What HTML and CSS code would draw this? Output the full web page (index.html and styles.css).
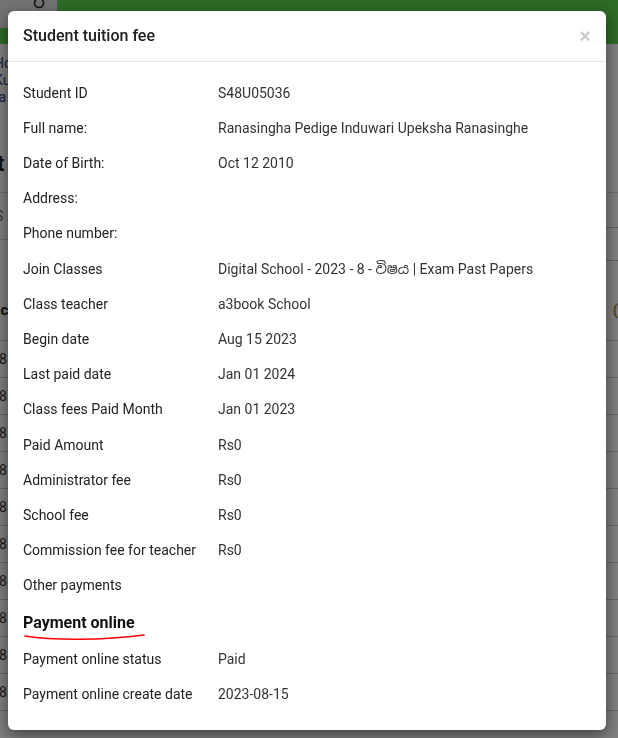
FILE: index.html
```html
<!DOCTYPE html>
<html lang="en">
<head>
    <meta charset="UTF-8">
    <meta name="viewport" content="width=device-width, initial-scale=1.0">
    <title>Student tuition fee</title>
    <link rel="stylesheet" href="styles.css">
</head>
<body>
    <div class="page">
        <div class="navbar">
            <div class="search-box">
                <svg class="search-icon" width="14" height="14" viewBox="0 0 14 14"><circle cx="6" cy="3" r="4.5" fill="none" stroke="#222" stroke-width="1.6"/></svg>
            </div>
        </div>
        <div class="side-links">
            <span class="dash">-</span>
            <a>Ho</a>
            <a>Ku</a>
            <a>ra</a>
        </div>
        <h2 class="page-title">t</h2>
        <div class="filter-row">
            <span class="filter-label">S</span>
            <input class="filter-input" placeholder="P">
        </div>
        <table class="student-table">
            <thead>
                <tr><th>uc</th><th></th><th class="sort">(</th></tr>
            </thead>
            <tbody>
                <tr><td>8</td><td></td><td></td></tr>
                <tr><td>8</td><td></td><td></td></tr>
                <tr><td>8</td><td></td><td></td></tr>
                <tr><td>8</td><td></td><td></td></tr>
                <tr><td>8</td><td></td><td></td></tr>
                <tr><td>8</td><td></td><td></td></tr>
                <tr><td>8</td><td></td><td></td></tr>
                <tr><td>8</td><td></td><td></td></tr>
                <tr><td>8</td><td></td><td></td></tr>
                <tr><td>8</td><td></td><td></td></tr>
            </tbody>
        </table>
    </div>

    <div class="modal-backdrop"></div>

    <div class="modal">
        <div class="modal-content">
            <div class="modal-header">
                <h4 class="modal-title">Student tuition fee</h4>
                <button class="close" type="button">&times;</button>
            </div>
            <div class="modal-body">
                <div class="info-row"><span class="label">Student ID</span><span class="value">S48U05036</span></div>
                <div class="info-row"><span class="label">Full name:</span><span class="value">Ranasingha Pedige Induwari Upeksha Ranasinghe</span></div>
                <div class="info-row"><span class="label">Date of Birth:</span><span class="value">Oct 12 2010</span></div>
                <div class="info-row"><span class="label">Address:</span><span class="value"></span></div>
                <div class="info-row"><span class="label">Phone number:</span><span class="value"></span></div>
                <div class="info-row"><span class="label">Join Classes</span><span class="value">Digital School - 2023 - 8 - විෂය | Exam Past Papers</span></div>
                <div class="info-row"><span class="label">Class teacher</span><span class="value">a3book School</span></div>
                <div class="info-row"><span class="label">Begin date</span><span class="value">Aug 15 2023</span></div>
                <div class="info-row"><span class="label">Last paid date</span><span class="value">Jan 01 2024</span></div>
                <div class="info-row"><span class="label">Class fees Paid Month</span><span class="value">Jan 01 2023</span></div>
                <div class="info-row"><span class="label">Paid Amount</span><span class="value">Rs0</span></div>
                <div class="info-row"><span class="label">Administrator fee</span><span class="value">Rs0</span></div>
                <div class="info-row"><span class="label">School fee</span><span class="value">Rs0</span></div>
                <div class="info-row"><span class="label">Commission fee for teacher</span><span class="value">Rs0</span></div>
                <div class="info-row"><span class="label">Other payments</span><span class="value"></span></div>

                <div class="section-heading">
                    <h5>Payment online</h5>
                    <svg class="underline" width="124" height="8" viewBox="0 0 124 8">
                        <path d="M2 2 C 30 6.5, 80 6.5, 121 1" fill="none" stroke="#f00" stroke-width="1.7" stroke-linecap="round"/>
                    </svg>
                </div>

                <div class="info-row"><span class="label">Payment online status</span><span class="value">Paid</span></div>
                <div class="info-row"><span class="label">Payment online create date</span><span class="value">2023-08-15</span></div>
            </div>
        </div>
    </div>
</body>
</html>
```

FILE: styles.css
```css
body {
    margin: 0;
    padding: 0;
    font-family: Roboto, "Noto Sans", "Noto Sans Sinhala", sans-serif;
    font-size: 14px;
    color: #333;
    background-color: #fff;
    overflow: hidden;
}

/* page behind the dialog */
.navbar {
    height: 44px;
    background-color: #5cd44f;
}

.search-box {
    width: 57px;
    height: 28px;
    background-color: #e6e6e6;
    position: relative;
}

.search-icon {
    position: absolute;
    left: 33px;
    top: 0;
}

.side-links {
    display: flex;
    flex-direction: column;
    line-height: 17px;
    margin-top: -6px;
    margin-left: -6px;
}

.side-links a,
.side-links .dash {
    color: #24407a;
}

.page-title {
    margin: 44px 0 0 -3px;
    font-size: 22px;
    line-height: 28px;
    color: #222;
}

.filter-row {
    margin-top: 14px;
    border-top: 1px solid #ddd;
    border-bottom: 1px solid #ddd;
    height: 46px;
    display: flex;
    align-items: center;
    justify-content: space-between;
    margin-left: -5px;
}

.filter-label {
    color: #666;
}

.filter-input {
    margin-top: 55px;
    width: 40px;
    height: 32px;
    border: 1px solid #bbb;
    margin-right: -20px;
    padding: 0 0 0 8px;
    font-size: 14px;
    font-family: Roboto, sans-serif;
}

.student-table {
    width: 100%;
    border-collapse: collapse;
    margin-top: 40px;
}

.student-table th {
    text-align: left;
    height: 60px;
    font-size: 15px;
    border-bottom: 1px solid #ccc;
    color: #222;
    padding: 0;
}

.student-table th:first-child {
    text-indent: -8px;
}

.student-table th.sort {
    text-align: right;
    color: #c77a00;
}

.student-table td {
    height: 36px;
    border-bottom: 1px solid #ccc;
    padding: 0;
    color: #333;
}

.student-table td:first-child {
    text-indent: -1px;
}

/* dialog */
.modal-backdrop {
    position: fixed;
    top: 0;
    left: 0;
    right: 0;
    bottom: 0;
    background-color: rgba(0, 0, 0, 0.5);
}

.modal {
    position: fixed;
    top: 0;
    left: 0;
    right: 0;
    bottom: 0;
    padding: 11px 12px 0 8px;
}

.modal-content {
    background-color: #fff;
    border-radius: 6px;
    box-shadow: 0 5px 15px rgba(0, 0, 0, 0.5);
}

.modal-header {
    display: flex;
    justify-content: space-between;
    align-items: center;
    padding: 14px 15px;
    border-bottom: 1px solid #e5e5e5;
}

.modal-title {
    margin: 0;
    font-size: 16px;
    line-height: 22px;
    font-weight: 500;
    color: #212121;
}

.close {
    background: none;
    border: none;
    padding: 0;
    font-size: 20px;
    line-height: 20px;
    font-weight: 700;
    color: #000;
    opacity: 0.2;
    font-family: "Liberation Sans", Arial, sans-serif;
    cursor: pointer;
}

.modal-body {
    padding: 13.5px 15px 18px 15px;
}

.info-row {
    display: grid;
    grid-template-columns: 195px 1fr;
    padding: 7px 0;
    line-height: 21.2px;
}

.info-row .label {
    color: #222;
}

.info-row .value {
    color: #333;
}

.section-heading {
    padding-top: 8.5px;
}

.section-heading h5 {
    margin: 0;
    font-size: 16px;
    line-height: 22px;
    font-weight: 700;
    color: #111;
}

.underline {
    display: block;
}
```
